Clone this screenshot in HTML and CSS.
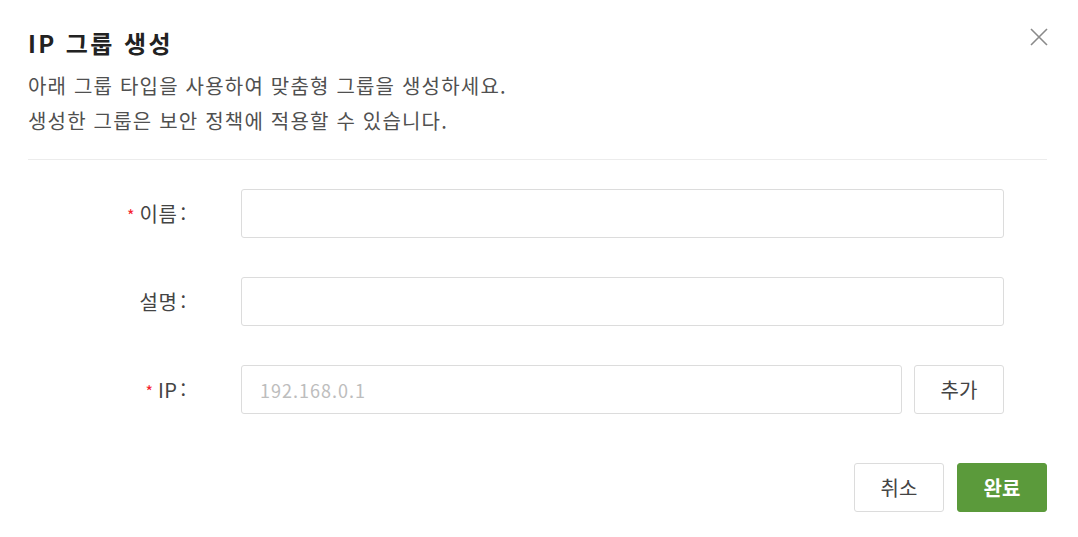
FILE: index.html
```html
<!DOCTYPE html>
<html lang="ko">
<head>
<meta charset="utf-8">
<title>IP 그룹 생성</title>
<link rel="stylesheet" href="styles.css">
</head>
<body>
<div class="dialog">
  <header class="head">
    <h1 class="title">IP 그룹 생성</h1>
    <button class="close" aria-label="닫기">
      <svg width="18" height="18" viewBox="0 0 18 18"><path d="M1 1L17 17M17 1L1 17" stroke="#8a8a8a" stroke-width="1.6" fill="none"/></svg>
    </button>
  </header>
  <p class="desc">아래 그룹 타입을 사용하여 맞춤형 그룹을 생성하세요.<br>생성한 그룹은 보안 정책에 적용할 수 있습니다.</p>
  <div class="sep"></div>
  <form class="form">
    <label class="label"><span class="req">*</span>이름<span class="colon">:</span></label>
    <input class="input" type="text">
    <label class="label">설명<span class="colon">:</span></label>
    <input class="input" type="text">
    <label class="label"><span class="req">*</span>IP<span class="colon">:</span></label>
    <div class="ip-row">
      <input class="input" type="text" placeholder="192.168.0.1">
      <button type="button" class="btn">추가</button>
    </div>
  </form>
  <footer class="foot">
    <button class="btn">취소</button>
    <button class="btn primary">완료</button>
  </footer>
</div>
</body>
</html>
```

FILE: styles.css
```css
* { box-sizing: border-box; }
html, body { margin: 0; padding: 0; background: #fff; }
body {
  font-family: "Noto Sans CJK KR", "Noto Sans", sans-serif;
  color: #333;
}
.dialog {
  width: 1078px;
  height: 537px;
  padding: 28px 31px 0 28px;
}
.head {
  display: flex;
  justify-content: space-between;
  align-items: flex-start;
  height: 30px;
}
.title {
  margin: 0;
  font-size: 24px;
  line-height: 30px;
  font-weight: 700;
  color: #222;
  letter-spacing: 2.4px;
}
.close {
  border: 0;
  background: none;
  padding: 0;
  margin: 0 -1px 0 0;
  width: 18px;
  height: 18px;
  display: block;
}
.close svg { display: block; }
.desc {
  margin: 10px 0 0;
  font-size: 20px;
  line-height: 35px;
  color: #505050;
  letter-spacing: 1.2px;
}
.sep {
  margin-top: 21px;
  height: 1px;
  background: #ececec;
}
.form {
  margin-top: 29px;
  display: grid;
  grid-template-columns: 158px 1fr;
  column-gap: 55px;
  row-gap: 39px;
  padding-right: 43px;
  align-items: center;
}
.label {
  text-align: right;
  font-size: 20px;
  color: #444;
  letter-spacing: 0.5px;
}
.colon {
  margin-left: 3px;
  letter-spacing: 0;
}
.req {
  color: #f5222d;
  margin-right: 5px;
  font-size: 16px;
  letter-spacing: 0;
}
.input {
  height: 49px;
  width: 100%;
  border: 1px solid #dcdcdc;
  border-radius: 3px;
  padding: 0 18px;
  font-family: inherit;
  font-size: 18px;
  letter-spacing: 1px;
  color: #333;
  outline: none;
}
.input::placeholder { color: #bdbdbd; }
.ip-row {
  display: flex;
  gap: 12px;
}
.ip-row .input { flex: 1; }
.btn {
  width: 90px;
  height: 49px;
  border: 1px solid #dcdcdc;
  border-radius: 3px;
  background: #fff;
  font-family: inherit;
  font-size: 20px;
  color: #444;
  padding: 0;
  flex: none;
}
.foot {
  margin-top: 49px;
  display: flex;
  justify-content: flex-end;
  gap: 13px;
}
.btn.primary {
  background: #5b9a3b;
  border-color: #5b9a3b;
  color: #fff;
  font-weight: 700;
}
```
